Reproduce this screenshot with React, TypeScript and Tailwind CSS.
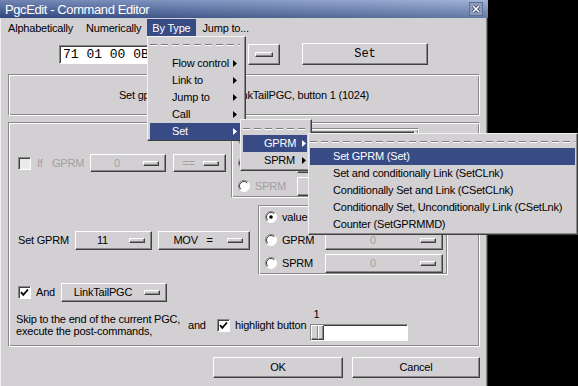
import React from "react"

// win-classic-ish bevels
const raised =
  "border border-t-white border-l-white border-r-[#404040] border-b-[#404040] shadow-[inset_-1px_-1px_0_#8a878a]"
const sunken =
  "border border-t-[#8a878a] border-l-[#8a878a] border-r-white border-b-white shadow-[inset_1px_1px_0_#404040]"
const groove =
  "border border-t-[#8a878a] border-l-[#8a878a] border-r-white border-b-white shadow-[inset_1px_1px_0_#fff,inset_-1px_-1px_0_#8a878a]"
const menuFrame =
  "border border-t-[#f2f2f2] border-l-[#f2f2f2] border-r-[#404040] border-b-[#404040] shadow-[inset_-1px_-1px_0_#8a878a] bg-[#d3d0d3]"
const dim = "text-[#a29fa2]"

const cx = (...c: (string | false | undefined)[]) => c.filter(Boolean).join(" ")

const Indicator = ({ className = "w-[16px]" }: { className?: string }) => (
  <span className={cx("block h-[5px] shrink-0 bg-[#d3d0d3]", raised, className)} />
)

function Combo({
  label,
  className,
  disabled,
}: {
  label: string
  className: string
  disabled?: boolean
}) {
  return (
    <div className={cx("flex items-center shrink-0 bg-[#d3d0d3]", raised, className)}>
      <span className={cx("flex-1 text-center whitespace-pre", disabled && dim)}>{label}</span>
      <Indicator className="w-[16px] mr-[6px]" />
    </div>
  )
}

function CheckBox({ checked, disabled }: { checked?: boolean; disabled?: boolean }) {
  return (
    <div
      className={cx(
        "w-[13px] h-[13px] shrink-0 flex items-center justify-center",
        sunken,
        disabled ? "bg-[#ecebec]" : "bg-white"
      )}
    >
      {checked && (
        <svg width="9" height="9" viewBox="0 0 9 9">
          <path d="M1 4.2l2.3 2.6L8 1.5" fill="none" stroke="#000" strokeWidth="1.8" />
        </svg>
      )}
    </div>
  )
}

function Radio({ checked }: { checked?: boolean }) {
  return (
    <svg width="12" height="12" viewBox="0 0 12 12" className="shrink-0">
      <circle cx="6" cy="6" r="5.5" fill="#fff" />
      <path d="M2.1 9.9A5.5 5.5 0 0 1 9.9 2.1" fill="none" stroke="#8a878a" />
      <path d="M9.9 2.1A5.5 5.5 0 0 1 2.1 9.9" fill="none" stroke="#fff" />
      <path d="M2.8 9.2A4.5 4.5 0 0 1 9.2 2.8" fill="none" stroke="#404040" />
      {checked && <circle cx="6" cy="6" r="1.8" fill="#000" />}
    </svg>
  )
}

function ValueBox({ disabled, box, label }: { disabled?: boolean; box: string; label: string }) {
  const t = disabled ? dim : ""
  const rows = ["GPRM", "SPRM"]
  return (
    <div className={cx("h-[70px] shrink-0 flex flex-col justify-center gap-[5px] pl-[6px]", groove, box)}>
      <div className="h-[18px] flex items-center">
        <Radio checked={!disabled} />
        <span className={cx("pl-[5px]", label, t)}>value</span>
        <div className={cx("w-[118px] h-[18px] bg-white flex items-center justify-center", sunken)}>0</div>
      </div>
      {rows.map((r) => (
        <div key={r} className="h-[18px] flex items-center">
          <Radio />
          <span className={cx("pl-[5px]", label, t)}>{r}</span>
          <Combo label="0" disabled className="w-[118px] h-[19px]" />
        </div>
      ))}
    </div>
  )
}

const Arrow = ({ className = "" }: { className?: string }) => (
  <svg width="4" height="7" viewBox="0 0 4 7" className={cx("shrink-0", className)}>
    <path d="M0 0L4 3.5L0 7Z" fill="currentColor" />
  </svg>
)

const TearOff = () => (
  <div>
    <div className="h-px bg-[image:repeating-linear-gradient(90deg,#7d7a7d_0_7px,transparent_7px_11px)]" />
    <div className="h-px bg-[image:repeating-linear-gradient(90deg,#ffffff_0_7px,transparent_7px_11px)]" />
  </div>
)

function Item({
  label,
  active,
  arrow,
  className = "",
  arrowClass = "",
}: {
  label: string
  active?: boolean
  arrow?: boolean
  className?: string
  arrowClass?: string
}) {
  return (
    <div
      className={cx(
        "h-[17px] flex items-center whitespace-nowrap",
        arrow && "justify-between",
        active && "bg-[#394b85] text-white",
        className
      )}
    >
      <span>{label}</span>
      {arrow && <Arrow className={arrowClass} />}
    </div>
  )
}

export default function App() {
  return (
    <div className="relative flex w-[578px] h-[386px] overflow-hidden bg-black font-['Liberation_Sans',Arial,sans-serif] text-[11px] tracking-[-0.2px] leading-none text-black">
      <div className="w-[488px] h-full shrink-0 flex flex-col bg-[#d3d0d3] shadow-[inset_-1px_0_0_#303030,inset_-2px_0_0_#8a878a,inset_1px_0_0_#efefef]">
        {/* title bar */}
        <div className="h-[18px] shrink-0 flex items-center justify-between pl-[5px] pr-[5px] text-white text-[13px] tracking-[-0.4px] bg-[image:linear-gradient(180deg,rgba(255,255,255,0.28),rgba(0,0,0,0.18)),linear-gradient(90deg,#3a5596,#7a94c8)]">
          <span>PgcEdit - Command Editor</span>
          <div className="w-[14px] h-[14px] flex items-center justify-center bg-[#8d9bbd] border border-[#5f6f98]">
            <svg width="10" height="10" viewBox="0 0 10 10">
              <path d="M2 2l6 6M8 2l-6 6" stroke="#2a3658" strokeWidth="3" />
              <path d="M2 2l6 6M8 2l-6 6" stroke="#fff" strokeWidth="1.6" />
            </svg>
          </div>
        </div>

        {/* menu bar */}
        <div className="h-[19px] shrink-0 flex items-end">
          <span className="ml-[8px] h-[18px] flex items-center">Alphabetically</span>
          <span className="ml-[13px] h-[18px] flex items-center">Numerically</span>
          <span className="ml-[6px] h-[18px] px-[5px] flex items-center bg-[#394b85] text-white">By Type</span>
          <span className="ml-[7px] h-[18px] flex items-center">Jump to...</span>
        </div>

        {/* hex code row */}
        <div className="mt-[6px] h-[22px] flex items-center">
          <div className={cx("ml-[59px] w-[185px] h-[19px] bg-white flex items-center pl-[3px] font-['Liberation_Mono',monospace] text-[13px] tracking-normal", sunken)}>
            71 01 00 0B 00 00 04 0C
          </div>
          <div className={cx("ml-[4px] w-[32px] h-[21px] flex items-center justify-center", raised)}>
            <Indicator className="w-[18px]" />
          </div>
          <div className={cx("ml-[22px] w-[126px] h-[22px] flex items-center justify-center font-['Liberation_Mono',monospace] text-[12px] tracking-normal", raised)}>
            Set
          </div>
        </div>

        {/* description */}
        <div className={cx("mt-[9px] ml-[8px] w-[472px] h-[42px] flex items-center justify-center", groove)}>
          Set gprm(11) =(mov) 0 ; LinkTailPGC, button 1 (1024)
        </div>

        {/* command editor */}
        <div className={cx("mt-[6px] ml-[8px] w-[472px] h-[225px] flex flex-col", groove)}>
          <div className="mt-[5px] h-[70px] flex items-center">
            <div className="ml-[9px]">
              <CheckBox disabled />
            </div>
            <span className={cx("ml-[6px] w-[15px]", dim)}>If</span>
            <span className={cx("w-[38px]", dim)}>GPRM</span>
            <Combo label="0" disabled className="w-[76px] h-[18px]" />
            <Combo label="==" disabled className="ml-[7px] w-[53px] h-[18px]" />
            <div className="ml-[5px]">
              <ValueBox disabled box="w-[188px]" label="w-[47px]" />
            </div>
          </div>

          <div className="mt-[7px] h-[70px] flex items-center">
            <span className="ml-[9px] w-[57px]">Set GPRM</span>
            <Combo label="11" className="w-[77px] h-[19px]" />
            <Combo label="MOV   =" className="ml-[6px] w-[92px] h-[19px]" />
            <div className="ml-[8px]">
              <ValueBox box="w-[190px]" label="w-[48px]" />
            </div>
          </div>

          <div className="mt-[8px] h-[19px] flex items-center">
            <div className="ml-[9px]">
              <CheckBox checked />
            </div>
            <span className="ml-[5px] w-[20px]">And</span>
            <Combo label="LinkTailPGC" className="ml-[5px] w-[106px] h-[19px]" />
          </div>

          <div className="mt-[5px] h-[36px] flex items-center">
            <div className="ml-[7px] w-[172px] leading-[12px] whitespace-nowrap">
              <div>Skip to the end of the current PGC,</div>
              <div>execute the post-commands,</div>
            </div>
            <span className="w-[29px]">and</span>
            <CheckBox checked />
            <span className="ml-[5px] w-[75px] whitespace-nowrap">highlight button</span>
            <div className="self-start mt-[1px]">
              <div className="w-[13px] h-[13px] flex items-center justify-center">1</div>
              <div className={cx("mt-[3px] w-[98px] h-[17px] bg-white flex", sunken)}>
                <div className={cx("w-[13px] h-full bg-[#d3d0d3] flex justify-center", raised)}>
                  <div className="w-[2px] h-full border-l border-[#8a878a] bg-white" />
                </div>
              </div>
            </div>
          </div>
        </div>

        {/* buttons */}
        <div className="mt-[10px] flex">
          <div className={cx("ml-[213px] w-[130px] h-[21px] flex items-center justify-center", raised)}>OK</div>
          <div className={cx("ml-[9px] w-[128px] h-[21px] flex items-center justify-center", raised)}>Cancel</div>
        </div>
      </div>

      {/* By Type menu */}
      <div className={cx("absolute left-[147px] top-[36px] w-[99px] h-[105px] pl-[2px] pr-[5px] pt-[7px]", menuFrame)}>
        <TearOff />
        <div className="mt-[9px]">
          <Item label="Flow control" arrow className="pl-[22px]" arrowClass="mr-[3px]" />
          <Item label="Link to" arrow className="pl-[22px]" arrowClass="mr-[3px]" />
          <Item label="Jump to" arrow className="pl-[22px]" arrowClass="mr-[3px]" />
          <Item label="Call" arrow className="pl-[22px]" arrowClass="mr-[3px]" />
          <Item label="Set" arrow active className="pl-[22px]" arrowClass="mr-[3px]" />
        </div>
      </div>

      {/* Set submenu */}
      <div className={cx("absolute left-[240px] top-[119px] w-[72px] h-[52px] pl-[2px] pr-[4px] pt-[8px]", menuFrame)}>
        <TearOff />
        <div className="mt-[5px]">
          <Item label="GPRM" arrow active className="pl-[21px]" arrowClass="mr-[1px]" />
          <Item label="SPRM" arrow className="pl-[21px]" arrowClass="mr-[1px]" />
        </div>
      </div>

      {/* GPRM submenu */}
      <div className={cx("absolute left-[308px] top-[133px] w-[270px] h-[102px] pl-[1px] pr-[2px] pt-[7px]", menuFrame)}>
        <TearOff />
        <div className="mt-[5px]">
          <Item label="Set GPRM (Set)" active className="pl-[23px]" />
          <Item label="Set and conditionally Link (SetCLnk)" className="pl-[23px]" />
          <Item label="Conditionally Set and Link (CSetCLnk)" className="pl-[23px]" />
          <Item label="Conditionally Set, Unconditionally Link (CSetLnk)" className="pl-[23px]" />
          <Item label="Counter (SetGPRMMD)" className="pl-[23px]" />
        </div>
      </div>
    </div>
  )
}
